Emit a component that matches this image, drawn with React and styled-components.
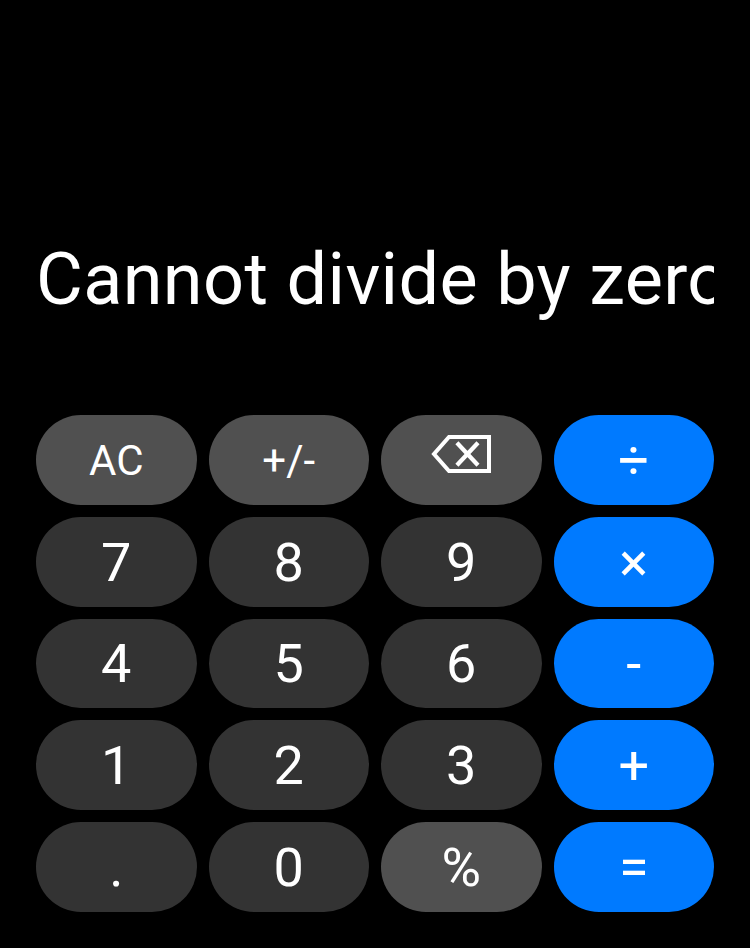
import React from 'react';
import styled, { createGlobalStyle } from 'styled-components';

const GlobalStyle = createGlobalStyle`
  *, *::before, *::after { box-sizing: border-box; }
  body { margin: 0; background: #000; font-family: Roboto, sans-serif; }
`;

const Calculator = styled.main`
  width: 750px;
  height: 948px;
  padding: 0 36px 36px;
  display: flex;
  flex-direction: column;
  background: #000;
  color: #fff;
`;

const Display = styled.output`
  display: flex;
  flex-direction: column;
  justify-content: flex-end;
  height: 415px;
  padding-bottom: 93px;
  overflow: hidden;
  white-space: nowrap;
  font-size: 72px;
  line-height: 84px;
  letter-spacing: 0.36px;
`;

const Keypad = styled.section`
  display: grid;
  grid-template-columns: repeat(4, 1fr);
  grid-template-rows: repeat(5, 1fr);
  gap: 12px;
  flex: 1;
`;

const tones = { digit: '#333333', function: '#505050', operator: '#007aff' };

const Key = styled.button`
  display: flex;
  align-items: center;
  justify-content: center;
  min-height: 0;
  padding: 2px 0 0;
  border: 0;
  border-radius: 45px;
  background: ${({ $tone }) => tones[$tone]};
  color: #fff;
  font-family: inherit;
  font-size: ${({ $small }) => ($small ? 42 : 54)}px;
  line-height: 1;
  cursor: pointer;
`;

const EraseIcon = styled.svg`
  width: 60px;
  height: 40px;
  margin-bottom: 14px;
  fill: none;
  stroke: #fff;
  stroke-width: 4;
`;

const keys = [
  ['AC', 'function', true], ['+/-', 'function', true], ['erase', 'function'], ['÷', 'operator'],
  ['7', 'digit'], ['8', 'digit'], ['9', 'digit'], ['×', 'operator'],
  ['4', 'digit'], ['5', 'digit'], ['6', 'digit'], ['-', 'operator'],
  ['1', 'digit'], ['2', 'digit'], ['3', 'digit'], ['+', 'operator'],
  ['.', 'digit'], ['0', 'digit'], ['%', 'function'], ['=', 'operator'],
];

export default function App() {
  return (
    <>
      <GlobalStyle />
      <Calculator>
        <Display>Cannot divide by zero</Display>
        <Keypad>
          {keys.map(([label, tone, small]) => (
            <Key key={label} $tone={tone} $small={small} aria-label={label}>
              {label === 'erase' ? (
                <EraseIcon viewBox="0 0 60 40">
                  <path d="M18 3H58V37H18L3 20Z" />
                  <path d="M25.9 8.7L47 31.3M47 8.7L25.9 31.3" strokeWidth="4.2" />
                </EraseIcon>
              ) : label}
            </Key>
          ))}
        </Keypad>
      </Calculator>
    </>
  );
}
